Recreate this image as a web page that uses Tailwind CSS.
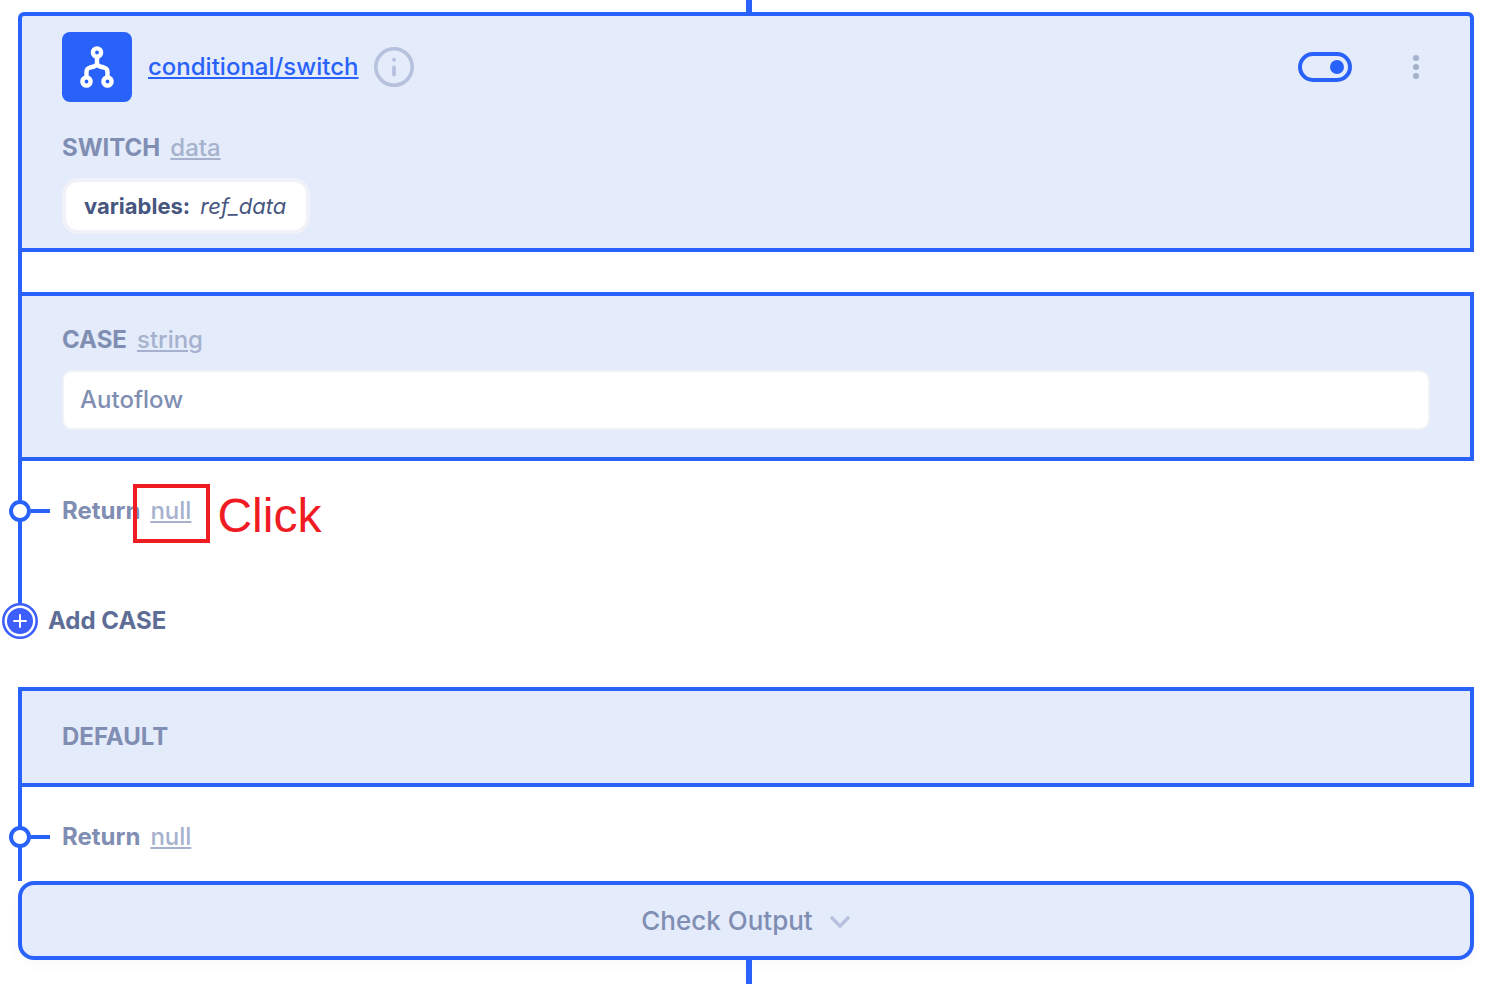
<!DOCTYPE html>
<html lang="en">
<head>
<meta charset="utf-8">
<meta name="viewport" content="width=device-width, initial-scale=1">
<title>conditional/switch</title>
<script src="https://cdn.jsdelivr.net/npm/@tailwindcss/browser@4"></script>
</head>
<body class="min-h-screen overflow-hidden bg-white font-['Inter','Liberation_Sans',sans-serif] text-2xl text-[#7f8eb2]">
<main class="pr-3 pl-[18px]">
  <div class="pl-[50%]"><div class="h-3 w-[6px] bg-[#2962fa]"></div></div>

  <section class="rounded-t-md border-4 border-[#2962fa] bg-[#e4ebfb] px-10 pt-4 pb-[14px]">
    <header class="flex items-center">
      <div class="flex size-[70px] items-center justify-center rounded-lg bg-[#2962fa]">
        <svg class="h-[42px] w-[34px]" viewBox="0 0 34 42" fill="none" stroke="#fff" stroke-width="4.400" stroke-linecap="round" stroke-linejoin="round" aria-hidden="true">
          <circle cx="17" cy="6.500" r="4.100"/>
          <circle cx="6.500" cy="35.500" r="4.100"/>
          <circle cx="27.500" cy="35.500" r="4.100"/>
          <path d="M17 11v6c0 2-1 3-3 3.500l-4 1c-2.500 .700-3.500 2-3.500 4.500v5M17 17c0 2 1 3 3 3.500l4 1c2.500 .700 3.500 2 3.500 4.500v5"/>
        </svg>
      </div>
      <a href="#" class="ml-4 font-medium text-[#2962fa] underline decoration-2 underline-offset-2">conditional/switch</a>
      <button type="button" aria-label="Information" class="ml-4">
        <svg class="size-10" viewBox="0 0 40 40" fill="none" stroke="#b6c2dd" aria-hidden="true">
          <circle cx="20" cy="20" r="18.200" stroke-width="3.600"/>
          <path d="M20 20.500v7" stroke-width="3.800" stroke-linecap="round"/>
          <circle cx="20" cy="12.800" r="2" fill="#b6c2dd" stroke="none"/>
        </svg>
      </button>
      <label class="ml-auto flex h-[30px] w-[54px] cursor-pointer items-center justify-start rounded-full border-4 border-[#2962fa] px-1 has-checked:justify-end">
        <input type="checkbox" checked aria-label="Enabled" class="size-[14px] appearance-none rounded-full bg-[#2962fa]">
      </label>
      <button type="button" aria-label="More options" class="mr-[11px] ml-[61px] flex w-[6px] flex-col items-center gap-[3px]">
        <span class="size-[6px] rounded-full bg-[#a4b2ce]"></span>
        <span class="size-[6px] rounded-full bg-[#a4b2ce]"></span>
        <span class="size-[6px] rounded-full bg-[#a4b2ce]"></span>
      </button>
    </header>
    <div class="mt-7 flex items-center gap-[10px] leading-9">
      <h2 class="font-bold">SWITCH</h2>
      <a href="#" class="font-medium text-[#a6b2cd] underline decoration-2 underline-offset-2">data</a>
    </div>
    <button type="button" class="mt-3 flex h-14 items-center gap-[10px] rounded-2xl border-4 border-[#f0f2f7] bg-white pt-[2px] pr-5 pl-[18px] text-[22px] text-[#46567f]">
      <span class="font-bold">variables:</span><em>ref_data</em>
    </button>
  </section>

  <div class="h-10 border-l-4 border-[#2962fa]"></div>

  <section class="border-4 border-[#2962fa] bg-[#e4ebfb] px-10 pt-[26px] pb-[27px]">
    <div class="flex items-center gap-[10px] leading-9">
      <label for="case-value" class="font-bold">CASE</label>
      <a href="#" class="font-medium text-[#a6b2cd] underline decoration-2 underline-offset-2">string</a>
    </div>
    <input id="case-value" type="text" value="Autoflow" class="mt-3 block h-[60px] w-full rounded-[10px] border-2 border-[#f0f2f7] bg-white px-4 pb-[2px] font-medium outline-none">
  </section>

  <div class="border-l-4 border-[#2962fa]">
    <div class="flex items-center py-8 leading-9">
      <span class="-ml-[13px] size-[22px] rounded-full border-4 border-[#2962fa] bg-white"></span>
      <span class="h-1 w-[19px] bg-[#2962fa]"></span>
      <span class="ml-3 font-bold">Return</span>
      <span class="relative ml-[10px]">
        <a href="#" class="font-medium text-[#a6b2cd] underline decoration-2 underline-offset-2">null</a>
        <span class="absolute -top-[9px] -left-[17px] h-[59px] w-[77px] border-4 border-[#ef1c24]"></span>
        <span class="absolute -top-[7px] left-[67px] font-['Liberation_Sans',Arial,sans-serif] text-5xl leading-[60px] text-[#ef1c24]">Click</span>
      </span>
    </div>
    <button type="button" class="mt-[42px] mb-12 -ml-5 flex items-center gap-[10px] font-bold text-[#5e6d96]">
      <svg class="size-9" viewBox="0 0 36 36" fill="none" aria-hidden="true">
        <circle cx="18" cy="18" r="16.700" fill="#fff" stroke="#3d5efb" stroke-width="2.600"/>
        <circle cx="18" cy="18" r="13" fill="#3d5efb"/>
        <path d="M18 12v12M12 18h12" stroke="#fff" stroke-width="2" stroke-linecap="round"/>
      </svg>
      Add CASE
    </button>
  </div>

  <section class="border-4 border-[#2962fa] bg-[#e4ebfb] px-10 py-7">
    <h2 class="leading-9 font-bold">DEFAULT</h2>
  </section>

  <div class="border-l-4 border-[#2962fa]">
    <div class="flex items-center pt-8 pb-[26px] leading-9">
      <span class="-ml-[13px] size-[22px] rounded-full border-4 border-[#2962fa] bg-white"></span>
      <span class="h-1 w-[19px] bg-[#2962fa]"></span>
      <span class="ml-3 font-bold">Return</span>
      <a href="#" class="ml-[10px] font-medium text-[#a6b2cd] underline decoration-2 underline-offset-2">null</a>
    </div>
  </div>

  <button type="button" class="flex h-[79px] w-full items-center justify-center gap-4 rounded-2xl border-4 border-[#2962fa] bg-[#e4ebfb] pt-[2px] text-[26px] font-medium shadow-[0_4px_16px_rgba(0,0,0,0.03)]">
    Check Output
    <svg class="h-[14px] w-[22px]" viewBox="0 0 22 14" fill="none" stroke="#b6c2dd" stroke-width="3.600" stroke-linecap="round" stroke-linejoin="round" aria-hidden="true"><path d="M3 3l8 8 8-8"/></svg>
  </button>
  <div class="pl-[50%]"><div class="h-6 w-[6px] bg-[#2962fa]"></div></div>
</main>
</body>
</html>
